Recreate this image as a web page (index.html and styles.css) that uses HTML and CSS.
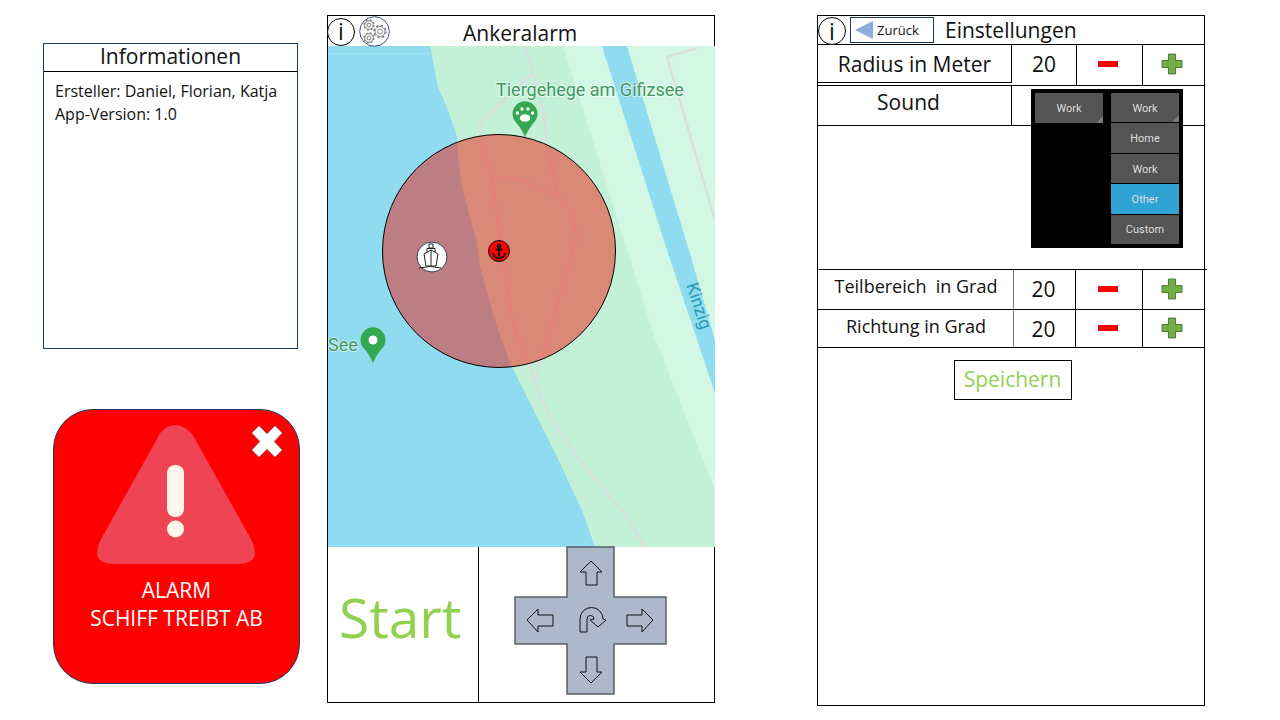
FILE: index.html
```html
<!DOCTYPE html>
<html lang="de">
<head>
  <meta charset="UTF-8">
  <title>Ankeralarm</title>
  <link rel="stylesheet" href="styles.css">
</head>
<body>

  <!-- Informationen -->
  <section class="window info">
    <h2 class="info-title">Informationen</h2>
    <p class="info-text">Ersteller: Daniel, Florian, Katja<br>App-Version: 1.0</p>
  </section>

  <!-- Alarm popup -->
  <section class="window alarm">
    <svg class="alarm-close" width="32" height="33" viewBox="0 0 32 33">
      <path d="M8 1 L16 9 L24 1 L31 8 L23 16.5 L31 25 L24 32 L16 24 L8 32 L1 25 L9 16.5 L1 8 Z" fill="#fff" stroke="#a6a6a6" stroke-width="1"/>
    </svg>
    <svg class="alarm-sign" width="160" height="141" viewBox="0 0 160 141">
      <path d="M65 8 Q79 -6 94 8 Q97 11 99 15 L156 117 Q166 140 142 140 L18 140 Q-6 140 4 117 L61 15 Q63 11 65 8 Z" fill="#ef4453"/>
      <rect x="71" y="41" width="17" height="52" rx="8" fill="#fff5ec"/>
      <circle cx="79.500" cy="105" r="8.500" fill="#fff5ec"/>
    </svg>
    <p class="alarm-text">ALARM<br>SCHIFF TREIBT AB</p>
  </section>

  <!-- Hauptansicht -->
  <section class="window main">
    <header class="main-head">
      <span class="info-btn">i</span>
      <svg class="gear-btn" width="31" height="31" viewBox="0 0 31 31">
        <circle cx="15.500" cy="15.500" r="14.800" fill="#fff" stroke="#3f5375" stroke-width="1"/>
        <g fill="#fff" stroke="#808080">
          <circle cx="21" cy="15.500" r="6" stroke-width="1.600" stroke-dasharray="2.400 2.300"/>
          <circle cx="21" cy="15.500" r="5" stroke-width="1"/>
          <circle cx="21" cy="15.500" r="2.400" stroke-width="1"/>
          <circle cx="10" cy="9" r="5" stroke-width="1.400" stroke-dasharray="2 1.930"/>
          <circle cx="10" cy="9" r="4.200" stroke-width="1"/>
          <circle cx="10" cy="9" r="1.900" stroke-width="1"/>
          <circle cx="10" cy="22" r="5" stroke-width="1.400" stroke-dasharray="2 1.930"/>
          <circle cx="10" cy="22" r="4.200" stroke-width="1"/>
          <circle cx="10" cy="22" r="1.900" stroke-width="1"/>
        </g>
      </svg>
      <h1 class="main-title">Ankeralarm</h1>
    </header>

    <svg class="map" width="387" height="501" viewBox="328 46 387 501">
      <rect x="328" y="46" width="387" height="501" fill="#8fdbef"/>
      <path d="M328 54 H430" stroke="#9be0f1" stroke-width="1.500"/>
      <path d="M430 46 L438 87 L448 110 L457 137 L458 157 L463 192 L477 243 L480 267 L497 327 L510 363 L540 423 L560 463 L583 513 L595 547 H715 V46 Z" fill="#c3f1d7"/>
      <path d="M563 46 L602 46 L667 250 L715 393 V490 L653 333 L627 250 Z" fill="#d2f7e4"/>
      <path d="M602 46 L627 46 L692 260 L715 340 V393 L667 250 Z" fill="#8fdbef"/>
      <path d="M627 46 H715 V340 L692 260 Z" fill="#d2f7e4"/>
      <g fill="none" stroke="#d9dfdf" stroke-width="2.500" stroke-linejoin="round">
        <path d="M525 46 L533 73 L543 107 L547 143 L558 197 L573 213 L577 240 L573 250 L543 353 L535 382"/>
        <path d="M533 73 L480 123 L480 140 L492 177 L500 240 L505 270 L513 323 L527 360 L535 382 L550 417 L577 457 L627 517 L645 547"/>
        <path d="M492 177 L520 180 L558 197"/>
        <path d="M697 48 L667 57 L712 210 L715 220"/>
      </g>
      <text class="map-label" x="496" y="96">Tiergehege am Gifizsee</text>
      <text class="map-label" x="328" y="351">See</text>
      <text class="map-river" transform="translate(686 285) rotate(72)">Kinzig</text>

      <path d="M525 137 Q521 128 516 122.500 A12.500 12.500 0 1 1 534 122.500 Q529 128 525 137 Z" fill="#34a853"/>
      <g fill="#fff">
        <ellipse cx="525" cy="118" rx="5.200" ry="3.800"/>
        <circle cx="517.500" cy="113" r="1.700"/>
        <circle cx="522" cy="109" r="1.700"/>
        <circle cx="528" cy="109" r="1.700"/>
        <circle cx="532.500" cy="113" r="1.700"/>
      </g>
      <path d="M373 363 Q369 354 364 348.500 A12.500 12.500 0 1 1 382 348.500 Q377 354 373 363 Z" fill="#34a853"/>
      <circle cx="373" cy="340" r="4.500" fill="#fff"/>

      <circle cx="499" cy="251" r="116.500" fill="rgba(245, 12, 0, 0.45)" stroke="#000" stroke-width="1"/>

      <circle cx="432" cy="257" r="15" fill="#fff" stroke="#2f3f60" stroke-width="1"/>
      <g fill="none" stroke="#222" stroke-width="1">
        <path d="M429 244 H433 V248 H429 Z"/>
        <path d="M427 252 V248.500 H435 V252"/>
        <path d="M431 250 L424 254 L426 266 H436 L438 254 Z"/>
        <path d="M431 250 V266 M419 268 Q431 265 441 268"/>
      </g>

      <circle cx="499" cy="251" r="10.500" fill="#f00" stroke="#111" stroke-width="1"/>
      <g fill="none" stroke="#111" stroke-width="1.800">
        <circle cx="499" cy="246" r="1.500"/>
        <path d="M499 247.500 V258 M495.500 249.500 H502.500 M493 253 Q494 258 499 258 Q504 258 505 253"/>
      </g>
    </svg>

    <div class="controls">
      <div class="start">Start</div>
      <div class="pad-cell">
        <svg class="pad" width="153" height="149" viewBox="514 546 153 149">
          <path d="M567 547 H614 V597 H666 V644 H614 V694 H567 V644 H515 V597 H567 Z" fill="#adb9ca" stroke="#5a5f6b" stroke-width="1.500"/>
          <g fill="none" stroke="#111" stroke-width="1">
            <path d="M591 561 L602 572 H597 V585 H586 V572 H580 Z"/>
            <path d="M591 683 L602 672 H597 V657 H586 V672 H580 Z"/>
            <path d="M527 620 L538 609 V615 H553 V626 H538 V632 Z"/>
            <path d="M653 620 L642 609 V615 H627 V626 H642 V632 Z"/>
            <path d="M580 632 V619 A11.500 11.500 0 0 1 603 619 L606 620 L598 627 L590 620 L594 619 A3.500 3.500 0 0 0 587 619 V632 Z"/>
          </g>
        </svg>
      </div>
    </div>
  </section>

  <!-- Einstellungen -->
  <section class="window settings">
    <header class="set-head">
      <span class="info-btn">i</span>
      <div class="back-btn"><span class="back-arrow"></span>Zurück</div>
      <h1 class="set-title">Einstellungen</h1>
    </header>

    <div class="set-row radius-row">
      <div class="cell cell-label">Radius in Meter</div>
      <div class="cell cell-value">20</div>
      <div class="cell cell-btn"><span class="minus"></span></div>
      <div class="cell-btn">
        <svg class="plus" width="22" height="22" viewBox="0 0 22 22"><path d="M7.500 1 H14.500 V7.500 H21 V14.500 H14.500 V21 H7.500 V14.500 H1 V7.500 H7.500 Z" fill="#70ad47" stroke="#507e32"/></svg>
      </div>
    </div>

    <div class="set-row sound-row">
      <div class="cell cell-label">Sound</div>
    </div>

    <div class="picker">
      <div class="picker-col">
        <div class="picker-item corner">Work</div>
      </div>
      <div class="picker-col">
        <div class="picker-item corner">Work</div>
        <div class="picker-item">Home</div>
        <div class="picker-item">Work</div>
        <div class="picker-item active">Other</div>
        <div class="picker-item">Custom</div>
      </div>
    </div>

    <div class="grad-block">
      <div class="grad-row">
        <div class="gcell gcell-label">Teilbereich&nbsp; in Grad</div>
        <div class="gcell gcell-value">20</div>
        <div class="gcell gcell-btn"><span class="minus"></span></div>
        <div class="gcell-btn">
          <svg class="plus" width="22" height="22" viewBox="0 0 22 22"><path d="M7.500 1 H14.500 V7.500 H21 V14.500 H14.500 V21 H7.500 V14.500 H1 V7.500 H7.500 Z" fill="#70ad47" stroke="#507e32"/></svg>
        </div>
      </div>
      <div class="grad-row">
        <div class="gcell gcell-label">Richtung in Grad</div>
        <div class="gcell gcell-value">20</div>
        <div class="gcell gcell-btn"><span class="minus"></span></div>
        <div class="gcell-btn">
          <svg class="plus" width="22" height="22" viewBox="0 0 22 22"><path d="M7.500 1 H14.500 V7.500 H21 V14.500 H14.500 V21 H7.500 V14.500 H1 V7.500 H7.500 Z" fill="#70ad47" stroke="#507e32"/></svg>
        </div>
      </div>
    </div>

    <div class="save-wrap">
      <div class="save-btn">Speichern</div>
    </div>
  </section>

</body>
</html>
```

FILE: styles.css
```css
* {
  box-sizing: border-box;
  margin: 0;
  padding: 0;
}

body {
  position: relative;
  width: 1280px;
  height: 720px;
  overflow: hidden;
  background-color: #fff;
  color: #111;
  font-family: "Open Sans", "Noto Sans", sans-serif;
}

/* the four windows sit on a free canvas */
.window {
  position: absolute;
  border: 1px solid #000;
  background-color: #fff;
}

h1, h2 {
  font-weight: 400;
}

.info-btn {
  display: flex;
  justify-content: center;
  align-items: center;
  flex: none;
  width: 28px;
  height: 28px;
  border: 1px solid #000;
  border-radius: 50%;
  background-color: #fff;
  font-size: 23px;
  line-height: 1;
}

/* Informationen */
.info {
  left: 43px;
  top: 43px;
  width: 255px;
  height: 306px;
  border-color: #1f3864;
}

.info-title {
  height: 28px;
  border-bottom: 1px solid #000;
  font-size: 21px;
  font-weight: 400;
  line-height: 25px;
  text-align: center;
}

.info-text {
  padding: 8px 0 0 11px;
  font-size: 16px;
  line-height: 23px;
  white-space: nowrap;
}

/* Alarm */
.alarm {
  left: 53px;
  top: 409px;
  width: 247px;
  height: 275px;
  padding-top: 14px;
  border-color: #1f3864;
  border-radius: 40px;
  background-color: #f00;
  color: #fff;
  text-align: center;
}

.alarm-sign {
  display: block;
  margin-left: 42px;
}

.alarm-close {
  position: absolute;
  left: 197px;
  top: 15px;
}

.alarm-text {
  margin-top: 11px;
  font-size: 21px;
  line-height: 28px;
}

/* Hauptansicht */
.main {
  left: 327px;
  top: 15px;
  width: 388px;
  height: 688px;
}

.main-head {
  position: relative;
  display: flex;
  align-items: center;
  height: 30px;
}

.main-head .info-btn {
  margin: 1px 0 0 -1px;
}

.gear-btn {
  margin-left: 4px;
}

.main-title {
  position: absolute;
  left: 135px;
  top: 2px;
  font-size: 21px;
  line-height: 30px;
}

.map {
  display: block;
}

.controls {
  display: grid;
  grid-template-columns: 151px 1fr;
  height: 155px;
}

.start {
  padding: 32px 0 0 11px;
  border-right: 1px solid #000;
  color: #92d050;
  font-size: 55px;
  line-height: 76px;
}

.pad-cell {
  position: relative;
}

.pad {
  display: block;
  margin: -1px 0 0 35px;
}

/* map text */
.map-label {
  fill: #3c9a5f;
  font-family: Roboto, sans-serif;
  font-size: 18px;
  paint-order: stroke;
  stroke: #fff;
  stroke-width: 2px;
  stroke-opacity: 0.6;
}

.map-river {
  fill: #2a9db5;
  font-family: Roboto, sans-serif;
  font-size: 17.500px;
}

/* Einstellungen */
.settings {
  left: 817px;
  top: 15px;
  width: 388px;
  height: 691px;
}

.set-head {
  display: flex;
  align-items: center;
  height: 29px;
  border-bottom: 1px solid #000;
}

.set-head .info-btn {
  margin-top: 2px;
}

.back-btn {
  display: flex;
  align-items: center;
  width: 84px;
  height: 26px;
  margin-left: 4px;
  padding-left: 4px;
  border: 1px solid #1f3864;
  font-size: 13px;
}

.back-arrow {
  width: 0;
  height: 0;
  margin-right: 4px;
  border-top: 9px solid transparent;
  border-bottom: 9px solid transparent;
  border-right: 18px solid #8faadc;
}

.set-title {
  margin-left: 11px;
  font-size: 21px;
  line-height: 28px;
}

.set-row {
  display: grid;
  grid-template-columns: 194px 65px 66px 1fr;
  border-bottom: 1px solid #000;
}

.radius-row {
  height: 41px;
}

.sound-row {
  height: 40px;
}

.cell {
  display: flex;
  justify-content: center;
  align-items: center;
  border-right: 1px solid #000;
}

.cell-label {
  font-size: 21px;
}

.radius-row .cell-label {
  height: 38px;
  border-bottom: 1px solid #000;
}

.sound-row .cell-label {
  padding: 0 12px 8px 0;
}

.cell-value {
  padding-bottom: 2px;
  font-size: 21px;
}

.cell-btn {
  display: flex;
  justify-content: center;
  align-items: center;
  padding: 0 3px 2px 0;
}

.minus {
  display: block;
  width: 20px;
  height: 6px;
  background-color: #f00;
}

.plus {
  display: block;
}

/* dropdown lies over the rows */
.picker {
  position: absolute;
  left: 213px;
  top: 73px;
  display: flex;
  gap: 8px;
  width: 152px;
  height: 159px;
  padding: 4px;
  background-color: #000;
}

.picker-col {
  display: flex;
  flex-direction: column;
  gap: 1px;
  width: 68px;
}

.picker-item {
  position: relative;
  display: flex;
  justify-content: center;
  align-items: center;
  height: 29.500px;
  padding-top: 1px;
  background-color: #545454;
  color: #ddd;
  font-size: 11px;
  font-family: "Roboto", sans-serif;
}

.picker-item.corner::after {
  content: "";
  position: absolute;
  right: 0;
  bottom: 0;
  border-left: 7px solid transparent;
  border-bottom: 7px solid #7a7a7a;
}

.picker-item.active {
  background-color: #2ea3d4;
}

.grad-block {
  margin: 143px -3px 0 1px;
  border-top: 1px solid #000;
}

.grad-row {
  display: grid;
  grid-template-columns: 195px 62px 67px 63px;
  height: 39px;
}

.grad-row + .grad-row {
  height: 39px;
  margin-left: -1px;
  padding-left: 1px;
  border-top: 1px solid #000;
  margin-right: 3px;
  border-bottom: 1px solid #000;
}

.gcell {
  display: flex;
  justify-content: center;
  align-items: center;
  border-right: 1px solid #000;
}

.gcell-label {
  padding-bottom: 7px;
  border-right-color: #777;
  font-size: 18px;
}

.grad-row + .grad-row .gcell-label {
  padding-bottom: 5px;
}

.gcell-value {
  padding: 0 2px 2px 0;
  font-size: 21px;
}

.grad-row + .grad-row .gcell-value {
  padding-bottom: 0;
}

.gcell-btn {
  display: flex;
  justify-content: center;
  align-items: center;
  padding: 0 3px 2px 0;
}

.gcell-btn .plus {
  margin-left: -3px;
}

.save-wrap {
  display: flex;
  justify-content: center;
  padding: 12px 0 0 3px;
}

.save-btn {
  width: 118px;
  height: 40px;
  border: 1px solid #000;
  color: #92d050;
  font-size: 21px;
  line-height: 36px;
  text-align: center;
}
```
